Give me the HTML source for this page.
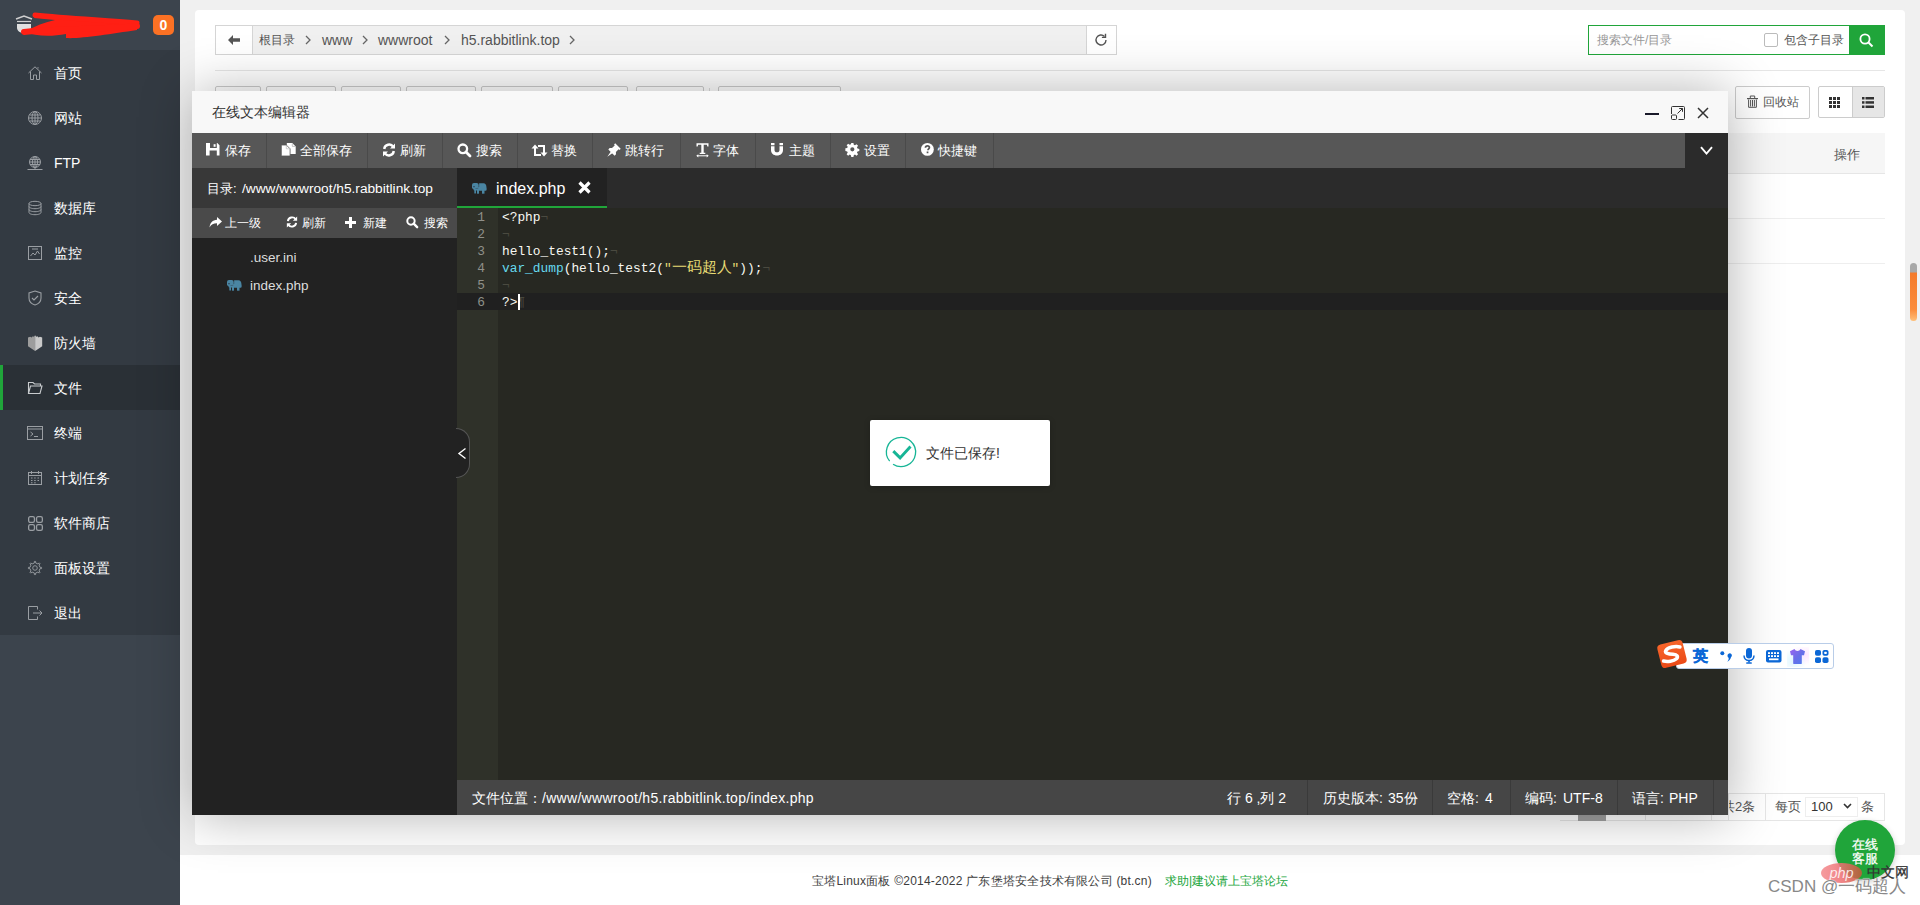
<!DOCTYPE html>
<html><head><meta charset="utf-8">
<style>
*{margin:0;padding:0;box-sizing:border-box}
html,body{width:1920px;height:905px;overflow:hidden;background:#f0f0f0;font-family:"Liberation Sans",sans-serif;font-size:14px;color:#333}
.a{position:absolute}
svg{position:absolute;overflow:visible}
#side{left:0;top:0;width:180px;height:905px;background:#3c444d}
#side .menu{left:0;top:50px;width:180px;height:585px;background:#333a42}
.mi{position:absolute;left:0;width:180px;height:45px;color:#fff;font-size:14px;line-height:45px}
.mi .t{position:absolute;left:54px;top:1px}
.mi svg{left:27px;top:15px;width:16px;height:16px}
.mi.act{background:#2a3036}
.mi.act:before{content:"";position:absolute;left:0;top:0;width:3px;height:45px;background:#20a53a}
#card{left:195px;top:10px;width:1710px;height:835px;background:#fff;border-radius:4px}
#footer{left:180px;top:855px;width:1740px;height:50px;background:#fff}
#dlg{left:192px;top:91px;width:1536px;height:724px;background:#f8f8f8;box-shadow:1px 1px 50px rgba(0,0,0,.3)}
.bc{left:215px;top:25px;width:902px;height:30px;border:1px solid #ccc;background:#f2f2f2}
.tb{background:#575757;color:#fff;font-size:14px}
.tbi{position:absolute;top:0;height:35px;line-height:35px;border-right:1px solid #4a4a4a}
.code{font-family:"Liberation Mono",monospace;font-size:12.85px;line-height:17px}
.inv{color:#4a4a40}
.st{top:690px;height:35px;line-height:35px;font-size:14px;color:#fff;white-space:nowrap}
</style></head><body>
<div id="side" class="a">
  <div class="a" style="left:0;top:0;width:180px;height:50px">
    <svg style="left:15px;top:14px;width:18px;height:20px" viewBox="0 0 18 20"><path d="M1 5l8-3 8 3" stroke="#d0d0d0" stroke-width="1.4" fill="none"/><path d="M2 7.5h14" stroke="#d0d0d0" stroke-width="1.2"/><path d="M2 10v4c0 3 3.5 5 7 5.5 3.5-.5 7-2.5 7-5.5v-4z" fill="#e0e0e0"/></svg>
    <svg style="left:20px;top:12px;width:120px;height:28px" viewBox="0 0 120 28"><path d="M15 3 C40 5 70 7 117 10 L117 18 C90 22 60 27 46 26 L46 22 C30 25 15 24 4 20 C15 14 25 10 35 8 L14 6Z" fill="#ff1f14"/><path d="M15 3 C45 6 80 8 117 11" stroke="#ff1f14" stroke-width="5" stroke-linecap="round" fill="none"/><path d="M4 20 C40 16 80 18 117 14" stroke="#ff1f14" stroke-width="6" stroke-linecap="round" fill="none"/></svg>
    <div class="a" style="left:153px;top:15px;width:21px;height:20px;background:#fb7124;border-radius:5px;color:#fff;font-weight:bold;font-size:14px;text-align:center;line-height:20px">0</div>
  </div>
  <div class="menu a">
    <div class="mi" style="top:0"><svg viewBox="0 0 16 16" fill="none" stroke="#9a9ea3" stroke-width="1"><path d="M1.5 8L8 1.8 14.5 8M3.5 6.5V14.5H6.5V10H9.5V14.5H12.5V6.5M11 3.5V2.2"/></svg><span class="t">首页</span></div>
    <div class="mi" style="top:45px"><svg viewBox="0 0 16 16" fill="none" stroke="#9a9ea3" stroke-width="1"><circle cx="8" cy="8" r="6.5"/><ellipse cx="8" cy="8" rx="3" ry="6.5"/><path d="M1.5 8h13M2.5 5h11M2.5 11h11M8 1.5v13"/></svg><span class="t">网站</span></div>
    <div class="mi" style="top:90px"><svg viewBox="0 0 16 16" fill="none" stroke="#9a9ea3" stroke-width="1"><circle cx="8" cy="7" r="5.5"/><ellipse cx="8" cy="7" rx="2.5" ry="5.5"/><path d="M2.5 7h11M3 4.5h10M3 9.5h10M8 1.5v13M0.5 14.5h15"/></svg><span class="t">FTP</span></div>
    <div class="mi" style="top:135px"><svg viewBox="0 0 16 16" fill="none" stroke="#9a9ea3" stroke-width="1"><ellipse cx="8" cy="3.5" rx="6" ry="2.2"/><path d="M2 3.5v9c0 1.2 2.7 2.2 6 2.2s6-1 6-2.2v-9M2 6.5c0 1.2 2.7 2.2 6 2.2s6-1 6-2.2M2 9.5c0 1.2 2.7 2.2 6 2.2s6-1 6-2.2"/></svg><span class="t">数据库</span></div>
    <div class="mi" style="top:180px"><svg viewBox="0 0 16 16" fill="none" stroke="#9a9ea3" stroke-width="1"><rect x="1.5" y="1.5" width="13" height="13"/><path d="M3.5 11l2.5-3 2 2 2.5-4 2 3M5 4h6"/></svg><span class="t">监控</span></div>
    <div class="mi" style="top:225px"><svg viewBox="0 0 16 16" fill="none" stroke="#9a9ea3" stroke-width="1.1"><path d="M8 1L14 3v5c0 3.5-2.8 6-6 7-3.2-1-6-3.5-6-7V3z"/><path d="M5 8l2 2 4-4"/></svg><span class="t">安全</span></div>
    <div class="mi" style="top:270px"><svg style="left:28px;top:15px;width:14.2px;height:16px" viewBox="0 0 14.2 16"><path d="M7.1 0.3L8.3 1.8 9.5 1.2 10.5 2.5 12 1.8 14.2 2.5V11.3L7.1 16z" fill="#c9c9c9"/><path d="M7.1 0.3L5.9 1.8 4.7 1.2 3.7 2.5 2.2 1.8 0 2.5V11.3L7.1 16z" fill="#9d9d9d"/></svg><span class="t">防火墙</span></div>
    <div class="mi act" style="top:315px"><svg viewBox="0 0 16 16" fill="none" stroke="#c8cbce" stroke-width="1.1"><path d="M1.5 13.5V2.5h4.5l1.5 1.5h6v2M1.5 13.5l2-7.5h11.5l-2 7.5z"/></svg><span class="t">文件</span></div>
    <div class="mi" style="top:360px"><svg viewBox="0 0 16 16" fill="none" stroke="#9a9ea3" stroke-width="1"><rect x="0.5" y="1.5" width="15" height="13"/><path d="M.5 4h15M3.5 7l2.5 2-2.5 2M7 11.5h4"/></svg><span class="t">终端</span></div>
    <div class="mi" style="top:405px"><svg viewBox="0 0 16 16" fill="none" stroke="#9a9ea3" stroke-width="1"><rect x="1.5" y="2.5" width="13" height="12"/><path d="M1.5 5.5h13M4.5 1v3M11.5 1v3M4 8h1.5M7.2 8h1.5M10.5 8H12M4 10.5h1.5M7.2 10.5h1.5M10.5 10.5H12M4 12.8h1.5M7.2 12.8h1.5"/></svg><span class="t">计划任务</span></div>
    <div class="mi" style="top:450px"><svg style="left:28px;top:16px;width:15px;height:15px" viewBox="0 0 15 15" fill="none" stroke="#9a9ea3" stroke-width="1.3"><rect x=".65" y=".65" width="5.8" height="5.8" rx="1.6"/><rect x="8.55" y=".65" width="5.8" height="5.8" rx="1.6"/><rect x=".65" y="8.55" width="5.8" height="5.8" rx="1.6"/><rect x="8.55" y="8.55" width="5.8" height="5.8" rx="1.6"/></svg><span class="t">软件商店</span></div>
    <div class="mi" style="top:495px"><svg style="left:28px;top:16px;width:14px;height:14px" viewBox="0 0 14 14" fill="none" stroke="#9a9ea3" stroke-width=".9" stroke-linejoin="round"><path d="M6.30 2.05 L6.38 0.43 L7.62 0.43 L7.70 2.05 L10.00 3.00 L11.21 1.91 L12.09 2.79 L11.00 4.00 L11.95 6.30 L13.57 6.38 L13.57 7.62 L11.95 7.70 L11.00 10.00 L12.09 11.21 L11.21 12.09 L10.00 11.00 L7.70 11.95 L7.62 13.57 L6.38 13.57 L6.30 11.95 L4.00 11.00 L2.79 12.09 L1.91 11.21 L3.00 10.00 L2.05 7.70 L0.43 7.62 L0.43 6.38 L2.05 6.30 L3.00 4.00 L1.91 2.79 L2.79 1.91 L4.00 3.00Z"/><circle cx="7" cy="7" r="2.3"/></svg><span class="t">面板设置</span></div>
    <div class="mi" style="top:540px"><svg viewBox="0 0 16 16" fill="none" stroke="#9a9ea3" stroke-width="1"><path d="M10.5 4.5v-3h-9v13h9v-3M6 8h9M12.5 5.5L15 8l-2.5 2.5"/></svg><span class="t">退出</span></div>
  </div>
</div>
<div id="card" class="a">
</div>
<!-- breadcrumb -->
<div class="a" style="left:215px;top:25px;width:902px;height:30px;border:1px solid #d5d5d5;background:#f0f0f0"></div>
<div class="a" style="left:215px;top:25px;width:38px;height:30px;border:1px solid #d5d5d5;background:#fff"></div>
<svg style="left:227px;top:34px;width:14px;height:12px" viewBox="0 0 14 12"><path d="M6 1L1 6l5 5V7.8h7V4.2H6z" fill="#555"/></svg>
<div class="a" style="left:259px;top:25px;height:30px;line-height:30px;font-size:12px;color:#555;white-space:nowrap">根目录</div>
<div class="a" style="left:322px;top:25px;height:30px;line-height:30px;font-size:14px;color:#555;white-space:nowrap">www</div>
<div class="a" style="left:378px;top:25px;height:30px;line-height:30px;font-size:14px;color:#555;white-space:nowrap">wwwroot</div>
<div class="a" style="left:461px;top:25px;height:30px;line-height:30px;font-size:14px;color:#555;white-space:nowrap">h5.rabbitlink.top</div>
<svg style="left:305px;top:35px;width:6px;height:10px" viewBox="0 0 6 10"><path d="M1 1l4 4-4 4" stroke="#666" stroke-width="1.3" fill="none"/></svg>
<svg style="left:362px;top:35px;width:6px;height:10px" viewBox="0 0 6 10"><path d="M1 1l4 4-4 4" stroke="#666" stroke-width="1.3" fill="none"/></svg>
<svg style="left:444px;top:35px;width:6px;height:10px" viewBox="0 0 6 10"><path d="M1 1l4 4-4 4" stroke="#666" stroke-width="1.3" fill="none"/></svg>
<svg style="left:569px;top:35px;width:6px;height:10px" viewBox="0 0 6 10"><path d="M1 1l4 4-4 4" stroke="#666" stroke-width="1.3" fill="none"/></svg>
<div class="a" style="left:1086px;top:25px;width:31px;height:30px;border:1px solid #d5d5d5;background:#fff"></div>
<svg style="left:1094px;top:33px;width:14px;height:14px" viewBox="0 0 14 14"><path d="M12 7a5 5 0 1 1-1.5-3.6" stroke="#555" stroke-width="1.4" fill="none"/><path d="M11.5 0.8v3.6H7.9" stroke="#555" stroke-width="1.4" fill="none"/></svg>
<!-- search -->
<div class="a" style="left:1588px;top:25px;width:262px;height:30px;border:1px solid #20a53a;background:#fff"></div>
<div class="a" style="left:1597px;top:25px;height:30px;line-height:30px;font-size:12px;color:#999">搜索文件/目录</div>
<div class="a" style="left:1764px;top:33px;width:14px;height:14px;border:1px solid #bbb;border-radius:2px;background:#fff"></div>
<div class="a" style="left:1784px;top:25px;height:30px;line-height:30px;font-size:12px;color:#555">包含子目录</div>
<div class="a" style="left:1849px;top:25px;width:36px;height:30px;background:#20a53a"></div>
<svg style="left:1859px;top:33px;width:15px;height:15px" viewBox="0 0 15 15"><circle cx="6" cy="6" r="4.6" stroke="#fff" stroke-width="1.8" fill="none"/><path d="M9.5 9.5l4 4" stroke="#fff" stroke-width="2"/></svg>
<div class="a" style="left:215px;top:70px;width:1670px;height:1px;background:#e6e6e6"></div>
<!-- button row (hidden mostly) -->
<div class="a" style="left:215px;top:86px;width:46px;height:32px;border:1px solid #ccc;border-radius:2px;background:#fff"></div>
<div class="a" style="left:266px;top:86px;width:70px;height:32px;border:1px solid #ccc;border-radius:2px;background:#fff"></div>
<div class="a" style="left:341px;top:86px;width:60px;height:32px;border:1px solid #ccc;border-radius:2px;background:#fff"></div>
<div class="a" style="left:406px;top:86px;width:70px;height:32px;border:1px solid #ccc;border-radius:2px;background:#fff"></div>
<div class="a" style="left:481px;top:86px;width:72px;height:32px;border:1px solid #ccc;border-radius:2px;background:#fff"></div>
<div class="a" style="left:558px;top:86px;width:70px;height:32px;border:1px solid #ccc;border-radius:2px;background:#fff"></div>
<div class="a" style="left:636px;top:86px;width:68px;height:32px;border:1px solid #ccc;border-radius:2px;background:#fff"></div>
<div class="a" style="left:709px;top:88px;width:1px;height:30px;background:#ddd"></div>
<div class="a" style="left:718px;top:86px;width:123px;height:32px;border:1px solid #ccc;border-radius:2px;background:#fff"></div>
<div class="a" style="left:1735px;top:86px;width:75px;height:33px;border:1px solid #ccc;border-radius:2px;background:#fff"></div>
<svg style="left:1747px;top:95px;width:11px;height:13px" viewBox="0 0 11 13" fill="none" stroke="#555"><path d="M3.3 3V1h4.4v2" stroke-width="1"/><path d="M0 3.6h11" stroke-width="1.2"/><path d="M1.6 4.5V12.3H9.4V4.5M3.6 5V11.5M5.5 5V11.5M7.4 5V11.5" stroke-width="1"/></svg>
<div class="a" style="left:1763px;top:86px;height:33px;line-height:33px;font-size:12px;color:#555">回收站</div>
<div class="a" style="left:1818px;top:86px;width:67px;height:32px;border:1px solid #ccc;border-radius:2px;background:#fff"></div>
<div class="a" style="left:1852px;top:87px;width:32px;height:30px;background:#e6e6e6;border-left:1px solid #ccc"></div>
<svg style="left:1829px;top:97px;width:11px;height:11px" viewBox="0 0 11 11" fill="#333"><rect x="0" y="0" width="3" height="3"/><rect x="4" y="0" width="3" height="3"/><rect x="8" y="0" width="3" height="3"/><rect x="0" y="4" width="3" height="3"/><rect x="4" y="4" width="3" height="3"/><rect x="8" y="4" width="3" height="3"/><rect x="0" y="8" width="3" height="3"/><rect x="4" y="8" width="3" height="3"/><rect x="8" y="8" width="3" height="3"/></svg>
<svg style="left:1862px;top:97px;width:12px;height:11px" viewBox="0 0 12 11" fill="#333"><rect x="0" y="0" width="2.5" height="2.5"/><rect x="3.5" y="0" width="8.5" height="2.5"/><rect x="0" y="4.2" width="2.5" height="2.5"/><rect x="3.5" y="4.2" width="8.5" height="2.5"/><rect x="0" y="8.5" width="2.5" height="2.5"/><rect x="3.5" y="8.5" width="8.5" height="2.5"/></svg>
<!-- table -->
<div class="a" style="left:215px;top:133px;width:1670px;height:41px;background:#f6f6f6;border-bottom:1px solid #e6e6e6"></div>
<div class="a" style="left:1834px;top:134px;height:41px;line-height:41px;font-size:13px;color:#555">操作</div>
<div class="a" style="left:215px;top:218px;width:1670px;height:1px;background:#eee"></div>
<div class="a" style="left:215px;top:263px;width:1670px;height:1px;background:#eee"></div>
<!-- pagination -->
<div class="a" style="left:1560px;top:793px;width:325px;height:28px;border-top:1px solid #e6e6e6;border-bottom:1px solid #e6e6e6"></div>
<div class="a" style="left:1578px;top:814px;width:28px;height:7px;background:#a0a0a0"></div>
<div class="a" style="left:1645px;top:814px;width:1px;height:7px;background:#e6e6e6"></div>
<div class="a" style="left:1711px;top:814px;width:1px;height:7px;background:#e6e6e6"></div>
<div class="a" style="left:1722px;top:793px;height:28px;line-height:28px;font-size:13px;color:#555">共2条</div>
<div class="a" style="left:1728px;top:793px;width:1px;height:28px;background:#e6e6e6"></div>
<div class="a" style="left:1765px;top:793px;width:120px;height:28px;border:1px solid #e6e6e6;background:#fff"></div>
<div class="a" style="left:1775px;top:792px;height:29px;line-height:29px;font-size:13px;color:#555">每页</div>
<div class="a" style="left:1805px;top:797px;width:53px;height:20px;border:1px solid #eee;background:#fff"></div>
<div class="a" style="left:1811px;top:797px;height:20px;line-height:20px;font-size:13px;color:#333">100</div>
<svg style="left:1843px;top:803px;width:9px;height:6px" viewBox="0 0 9 6"><path d="M1 1l3.5 3.5L8 1" stroke="#333" stroke-width="1.6" fill="none"/></svg>
<div class="a" style="left:1861px;top:792px;height:29px;line-height:29px;font-size:13px;color:#555">条</div>
<!-- scrollbar -->
<div class="a" style="left:1910px;top:263px;width:7px;height:58px;border-radius:4px;background:linear-gradient(#a8a8a8 0,#a8a8a8 9px,#f47a2a 10px,#fb8c3c 80%,#ffc07a 100%)"></div>
<div id="footer" class="a"></div>
<div class="a" style="left:812px;top:872px;height:18px;line-height:18px;font-size:12px;color:#3d3d3d;white-space:nowrap;letter-spacing:.22px">宝塔Linux面板 ©2014-2022 广东堡塔安全技术有限公司 (bt.cn)</div>
<div class="a" style="left:1165px;top:872px;height:18px;line-height:18px;font-size:12px;color:#20a53a;white-space:nowrap">求助|建议请上宝塔论坛</div>
<div id="dlg" class="a">
 <div class="a" style="left:20px;top:0;height:42px;line-height:42px;font-size:14px;color:#333">在线文本编辑器</div>
 <svg style="left:1453px;top:22px;width:14px;height:2px" viewBox="0 0 14 2"><rect width="14" height="2" fill="#1a1a2a"/></svg>
 <svg style="left:1479px;top:15px;width:14px;height:14px" viewBox="0 0 14 14" fill="none" stroke="#333" stroke-width="1"><path d="M0.5 8V1.5a1 1 0 0 1 1-1h11a1 1 0 0 1 1 1v11a1 1 0 0 1-1 1H7.5M1.5 9h3a1 1 0 0 1 1 1v2.5a1 1 0 0 1-1 1h-3a1 1 0 0 1-1-1V10a1 1 0 0 1 1-1zM6.5 7.5L11.5 2.5M8.2 2.5h3.3v3.3"/></svg>
 <svg style="left:1505px;top:16px;width:12px;height:12px" viewBox="0 0 12 12"><path d="M1 1l10 10M11 1L1 11" stroke="#333" stroke-width="1.5"/></svg>
 <!-- toolbar -->
 <div class="a" style="left:0;top:42px;width:1536px;height:35px;background:#2b2b2b"></div>
 <div class="a tb" style="left:0;top:42px;width:1493px;height:35px"></div>
 <div class="a" style="left:74px;top:42px;width:1px;height:35px;background:#4a4a4a"></div>
 <div class="a" style="left:175px;top:42px;width:1px;height:35px;background:#4a4a4a"></div>
 <div class="a" style="left:250px;top:42px;width:1px;height:35px;background:#4a4a4a"></div>
 <div class="a" style="left:325px;top:42px;width:1px;height:35px;background:#4a4a4a"></div>
 <div class="a" style="left:400px;top:42px;width:1px;height:35px;background:#4a4a4a"></div>
 <div class="a" style="left:488px;top:42px;width:1px;height:35px;background:#4a4a4a"></div>
 <div class="a" style="left:563px;top:42px;width:1px;height:35px;background:#4a4a4a"></div>
 <div class="a" style="left:638px;top:42px;width:1px;height:35px;background:#4a4a4a"></div>
 <div class="a" style="left:713px;top:42px;width:1px;height:35px;background:#4a4a4a"></div>
 <div class="a" style="left:801px;top:42px;width:1px;height:35px;background:#4a4a4a"></div>
 <svg style="left:14px;top:52px;width:13.5px;height:12.5px" viewBox="0 0 13.5 12.5" fill="#fff"><path d="M0 0H4V5H10.8V0H11.3L13.5 2.2V12.5H10.8V7.6H3.6V12.5H0Z"/><path d="M7.6 1.2h2v2.6h-2z"/></svg>
 <div class="a" style="left:33px;top:42px;height:35px;line-height:35px;font-size:13px;color:#fff;white-space:nowrap">保存</div>
 <svg style="left:89px;top:52px;width:15px;height:13px" viewBox="0 0 15 13"><path d="M5.8 0H11.3L14.7 3.4V10.9H5.8Z" fill="#fff"/><path d="M11.3 0.5V3.4H14.2" stroke="#aaa" stroke-width=".7" fill="none"/><path d="M0.3 2H5.3L9.1 5.8V13H0.3Z" fill="#fff" stroke="#575757" stroke-width=".8"/><path d="M5.3 2.3V5.8H8.8" stroke="#bbb" stroke-width=".7" fill="none"/></svg>
 <div class="a" style="left:108px;top:42px;height:35px;line-height:35px;font-size:13px;color:#fff;white-space:nowrap">全部保存</div>
 <svg style="left:190px;top:52px;width:14px;height:14px" viewBox="0 0 14 14" fill="none" stroke="#fff" stroke-width="2.4"><path d="M2.2 6A5 5 0 0 1 11.3 3.8M11.8 8A5 5 0 0 1 2.7 10.2"/><path d="M13 0.5v5h-5z M1 13.5v-5h5z" fill="#fff" stroke="none"/></svg>
 <div class="a" style="left:208px;top:42px;height:35px;line-height:35px;font-size:13px;color:#fff;white-space:nowrap">刷新</div>
 <svg style="left:265px;top:52px;width:14px;height:14px" viewBox="0 0 14 14" fill="none" stroke="#fff" stroke-width="2.3"><circle cx="5.8" cy="5.8" r="4.3"/><path d="M9 9l4 4" stroke-width="2.8" stroke-linecap="round"/></svg>
 <div class="a" style="left:284px;top:42px;height:35px;line-height:35px;font-size:13px;color:#fff;white-space:nowrap">搜索</div>
 <svg style="left:339px;top:53px;width:17px;height:13px" viewBox="0 0 17 13" fill="#fff"><path d="M3 12V4.5H0.5L4 0.5l3.5 4H5v5.5h5v2z"/><path d="M14 1v7.5h2.5L13 12.5 9.5 8.5H12V3H7V1z"/></svg>
 <div class="a" style="left:359px;top:42px;height:35px;line-height:35px;font-size:13px;color:#fff;white-space:nowrap">替换</div>
 <svg style="left:415px;top:51.5px;width:14px;height:14px" viewBox="0 0 14 14" fill="#fff"><path d="M8.2 0.3L13.7 5.8 12.6 6.9 11.6 6.3 8.9 9 9 11.3 7.6 12.7 1.3 6.4 2.7 5 5 5.1 7.7 2.4 7.1 1.4z"/><path d="M4.1 8.3L0.3 13.7 5.7 9.9z"/></svg>
 <div class="a" style="left:433px;top:42px;height:35px;line-height:35px;font-size:13px;color:#fff;white-space:nowrap">跳转行</div>
 <svg style="left:504px;top:52px;width:13px;height:14px" viewBox="0 0 13 14" fill="#fff"><path d="M0.5 0.3h12v3.2h-1.2L10.9 1.8H7.7v8h1.6v1.2H3.7V9.8h1.6v-8H2.1L1.7 3.5H.5z"/><path d="M1.8 12.8h9.4" stroke="#fff" stroke-width="1"/><path d="M0.3 12.8l2-1.6v3.2zM12.7 12.8l-2-1.6v3.2z"/></svg>
 <div class="a" style="left:521px;top:42px;height:35px;line-height:35px;font-size:13px;color:#fff;white-space:nowrap">字体</div>
 <svg style="left:579px;top:52px;width:12px;height:12.5px" viewBox="0 0 12 12.5" fill="#fff"><path d="M0 0h3.5v2.2H0zM8.5 0H12v2.2H8.5zM0 3.2h3.5V7c0 1.5 1 2.3 2.5 2.3S8.5 8.5 8.5 7V3.2H12V7c0 3.4-2.5 5.5-6 5.5S0 10.4 0 7z"/></svg>
 <div class="a" style="left:597px;top:42px;height:35px;line-height:35px;font-size:13px;color:#fff;white-space:nowrap">主题</div>
 <svg style="left:654px;top:52px;width:12.7px;height:12.7px" viewBox="0 0 14 14" fill="#fff"><path d="M5.8 0h2.4l.4 2 1.3.6 1.7-1.2 1.7 1.7-1.2 1.7.6 1.3 2 .4v2.4l-2 .4-.6 1.3 1.2 1.7-1.7 1.7-1.7-1.2-1.3.6-.4 2H5.8l-.4-2-1.3-.6-1.7 1.2-1.7-1.7 1.2-1.7-.6-1.3-2-.4V5.8l2-.4.6-1.3L.7 2.4l1.7-1.7 1.7 1.2 1.3-.6zM7 4.7A2.3 2.3 0 1 0 7 9.3 2.3 2.3 0 1 0 7 4.7z"/></svg>
 <div class="a" style="left:672px;top:42px;height:35px;line-height:35px;font-size:13px;color:#fff;white-space:nowrap">设置</div>
 <svg style="left:729px;top:52px;width:12.8px;height:12.8px" viewBox="0 0 14 14"><circle cx="7" cy="7" r="7" fill="#fff"/><path d="M4.9 5.3C4.9 4 5.8 3.1 7.1 3.1S9.2 4 9.2 5c0 1.5-1.6 1.6-1.6 3" stroke="#575757" stroke-width="1.9" fill="none"/><rect x="6.2" y="9.3" width="1.9" height="1.9" fill="#575757"/></svg>
 <div class="a" style="left:746px;top:42px;height:35px;line-height:35px;font-size:13px;color:#fff;white-space:nowrap">快捷键</div>
 <svg style="left:1508px;top:55px;width:13px;height:9px" viewBox="0 0 13 9"><path d="M1 1.2L6.5 7.5 12 1.2" stroke="#fff" stroke-width="1.9" fill="none"/></svg>
 <div class="a" style="left:0;top:77px;width:265px;height:647px;background:#222"></div>
 <div class="a" style="left:0;top:77px;width:265px;height:40px;background:#383838"></div>
 <div class="a" style="left:15px;top:77px;height:40px;line-height:40px;font-size:13px;color:#fff;white-space:nowrap;padding-top:1px">目录<span style="display:inline-block;width:9px">:</span><span style="font-size:13.7px">/www/wwwroot/h5.rabbitlink.top</span></div>
 <div class="a" style="left:0;top:117px;width:265px;height:30px;background:#4a4a4a"></div>
 <svg style="left:17px;top:126px;width:13px;height:11px" viewBox="0 0 13 11" fill="#fff"><path d="M8 0l5 4.5L8 9V6.3C4.5 6.3 2 7.5 0.5 10.5 1 5.5 3.5 3 8 2.7z"/></svg>
 <div class="a" style="left:33px;top:117px;height:30px;line-height:30px;font-size:12px;color:#fff">上一级</div>
 <svg style="left:94px;top:125px;width:12px;height:12px" viewBox="0 0 14 14" fill="none" stroke="#fff" stroke-width="2.2"><path d="M2.2 6A5 5 0 0 1 11.3 3.8M11.8 8A5 5 0 0 1 2.7 10.2"/><path d="M13 0.5v5h-5z M1 13.5v-5h5z" fill="#fff" stroke="none"/></svg>
 <div class="a" style="left:110px;top:117px;height:30px;line-height:30px;font-size:12px;color:#fff">刷新</div>
 <svg style="left:153px;top:126px;width:11px;height:11px" viewBox="0 0 11 11" fill="#fff"><path d="M4 0h3v4h4v3H7v4H4V7H0V4h4z"/></svg>
 <div class="a" style="left:171px;top:117px;height:30px;line-height:30px;font-size:12px;color:#fff">新建</div>
 <svg style="left:214px;top:125px;width:12px;height:12px" viewBox="0 0 14 14" fill="none" stroke="#fff" stroke-width="2.3"><circle cx="5.8" cy="5.8" r="4.3"/><path d="M9 9l4 4" stroke-width="2.8" stroke-linecap="round"/></svg>
 <div class="a" style="left:232px;top:117px;height:30px;line-height:30px;font-size:12px;color:#fff">搜索</div>
 <div class="a" style="left:58px;top:158px;height:18px;line-height:18px;font-size:13.5px;color:#ddd">.user.ini</div>
 <svg style="left:35px;top:189px;width:14.4px;height:10.7px" viewBox="0 0 14.4 10.7" fill="#4a85a2"><rect x="0" y="0" width="6.7" height="6.2" rx="2"/><path d="M7.1 0.2H11.5C13.2 0.2 14.4 2 14.4 3.7V7.4H7.1z"/><rect x="1.5" y="4" width="12.9" height="3.4" rx="1"/><rect x="2.3" y="5" width="1.7" height="5.4" rx=".5"/><rect x="5" y="6" width="2" height="4.7"/><rect x="10" y="6" width="2.5" height="4.7"/><circle cx="2" cy="3.7" r=".6" fill="#223"/><path d="M3.5 5.5Q5 6 6.5 5" stroke="#345" stroke-width=".5" fill="none"/></svg>
 <div class="a" style="left:58px;top:186px;height:18px;line-height:18px;font-size:13.5px;color:#ddd">index.php</div>
 <!-- tabs -->
 <div class="a" style="left:265px;top:77px;width:1271px;height:40px;background:#2b2b2b"></div>
 <div class="a" style="left:265px;top:77px;width:150px;height:40px;background:#222;border-bottom:2px solid #20a53a"></div>
 <svg style="left:279.5px;top:91.6px;width:14.4px;height:10.7px" viewBox="0 0 14.4 10.7" fill="#4a85a2"><rect x="0" y="0" width="6.7" height="6.2" rx="2"/><path d="M7.1 0.2H11.5C13.2 0.2 14.4 2 14.4 3.7V7.4H7.1z"/><rect x="1.5" y="4" width="12.9" height="3.4" rx="1"/><rect x="2.3" y="5" width="1.7" height="5.4" rx=".5"/><rect x="5" y="6" width="2" height="4.7"/><rect x="10" y="6" width="2.5" height="4.7"/><circle cx="2" cy="3.7" r=".6" fill="#223"/><path d="M3.5 5.5Q5 6 6.5 5" stroke="#345" stroke-width=".5" fill="none"/></svg>
 <div class="a" style="left:304px;top:77px;height:40px;line-height:40px;font-size:16px;color:#fff;padding-top:1px">index.php</div>
 <svg style="left:386px;top:90px;width:13px;height:13px" viewBox="0 0 13 13"><path d="M1.5 1.5l10 10M11.5 1.5l-10 10" stroke="#fff" stroke-width="3.2"/></svg>
 <!-- editor -->
 <div class="a" style="left:265px;top:117px;width:1271px;height:572px;background:#272822"></div>
 <div class="a" style="left:265px;top:117px;width:41px;height:572px;background:#2f3129"></div>
 <div class="a" style="left:265px;top:202px;width:1271px;height:17px;background:#202020"></div>
 <!-- code -->
 <div class="a code" style="left:263px;top:118px;width:30px;text-align:right;color:#8f908a">1<br>2<br>3<br>4<br>5<br>6</div>
 <div class="a code" style="left:310px;top:118px;color:#f8f8f2;white-space:pre">&lt;?php<span class="inv">¬</span>
<span class="inv">¬</span>
hello_test1();<span class="inv">¬</span>
<span style="color:#66d9ef">var_dump</span>(hello_test2(<span style="color:#e6db74">"<span style="font-size:15px">一码超人</span>"</span>));<span class="inv">¬</span>
<span class="inv">¬</span>
?&gt;<span class="inv">¶</span></div>
 <div class="a" style="left:326px;top:203px;width:2px;height:16px;background:#fff"></div>
 <!-- collapse handle -->
 <div class="a" style="left:264px;top:337px;width:14px;height:50px;background:#222;border:1px solid #555;border-left:none;border-radius:0 14px 14px 0"></div>
 <svg style="left:265.5px;top:356.5px;width:8px;height:11px" viewBox="0 0 8 11"><path d="M7.5 0.5L1 5.5l6.5 5" stroke="#fff" stroke-width="1.4" fill="none"/></svg>
 <!-- status bar -->
 <div class="a" style="left:265px;top:689px;width:1271px;height:35px;background:#464646"></div>
 <div class="a st" style="left:280px">文件位置：<span style="letter-spacing:.3px">/www/wwwroot/h5.rabbitlink.top/index.php</span></div>
 <div class="a st" style="left:1035px">行 6 ,列 2</div>
 <div class="a" style="left:1115px;top:689px;width:1px;height:35px;background:#3a3a3a"></div>
 <div class="a st" style="left:1131px">历史版本<span style="display:inline-block;width:9px">:</span>35份</div>
 <div class="a" style="left:1240px;top:689px;width:1px;height:35px;background:#3a3a3a"></div>
 <div class="a st" style="left:1255px">空格<span style="display:inline-block;width:10px">:</span>4</div>
 <div class="a" style="left:1318px;top:689px;width:1px;height:35px;background:#3a3a3a"></div>
 <div class="a st" style="left:1333px">编码<span style="display:inline-block;width:10px">:</span>UTF-8</div>
 <div class="a" style="left:1425px;top:689px;width:1px;height:35px;background:#3a3a3a"></div>
 <div class="a st" style="left:1440px">语言<span style="display:inline-block;width:9px">:</span>PHP</div>
 <div class="a" style="left:1521px;top:689px;width:1px;height:35px;background:#3a3a3a"></div>
</div>
<!-- toast -->
<div class="a" style="left:870px;top:420px;width:180px;height:66px;background:#fff;border-radius:2px;box-shadow:0 1px 6px rgba(0,0,0,.2)"></div>
<svg style="left:884.5px;top:436px;width:32px;height:32px" viewBox="0 0 32 32"><path d="M4.65 25.19A14.6 14.6 0 1 1 8.05 28.25" stroke="#17b596" stroke-width="1.3" fill="none"/><path d="M8.3 15.1L15.1 21.9 25.5 10.5" stroke="#17b596" stroke-width="2.9" fill="none"/></svg>
<div class="a" style="left:926px;top:420px;height:66px;line-height:66px;font-size:14px;color:#333;white-space:nowrap">文件已保存!</div>
<!-- sogou ime -->
<div class="a" style="left:1676px;top:643px;width:158px;height:26px;background:#fff;border:1px solid #b9cde8;border-radius:3px"></div>
<svg style="left:1655px;top:638px;width:34px;height:32px" viewBox="0 0 34 32"><defs><linearGradient id="so" x1="0" y1="0" x2="0" y2="1"><stop offset="0" stop-color="#f8652a"/><stop offset="1" stop-color="#ea4a17"/></linearGradient></defs><rect x="4" y="4" width="26" height="24" rx="4" fill="url(#so)" transform="rotate(-14 17 16)"/><path d="M26 10.5C22 8.5 14 8.5 11.5 11.5 9.5 14 14 15.5 18 16.5S23 19.5 20.5 21.5C17.5 23.5 11 23 7.5 21.5" stroke="#fff" stroke-width="3.6" fill="none" stroke-linecap="round" transform="rotate(-10 17 16)"/></svg>
<div class="a" style="left:1693px;top:645px;height:22px;line-height:22px;font-size:14.5px;font-weight:bold;color:#0b67d6;-webkit-text-stroke:.5px #0b67d6">英</div>
<svg style="left:1719px;top:651px;width:13px;height:11px" viewBox="0 0 13 11" fill="#0b67d6"><circle cx="3.3" cy="2.3" r="2"/><path d="M8.5 4.5a2.2 2.2 0 1 1 3.5 1.8C11.5 8.5 10 10 8.3 10.8 9.3 9.5 9.8 8.5 9.7 6.8 9 6.5 8.5 5.6 8.5 4.5z"/></svg>
<svg style="left:1743px;top:648px;width:12px;height:16px" viewBox="0 0 12 16" fill="#0b67d6"><rect x="3" y="0" width="6" height="10.5" rx="3"/><path d="M1 7.5c0 3 2.2 5 5 5s5-2 5-5" stroke="#0b67d6" stroke-width="1.5" fill="none"/><rect x="5.2" y="12" width="1.6" height="2.5"/><rect x="3.2" y="14.2" width="5.6" height="1.6" rx=".5"/></svg>
<svg style="left:1766px;top:650px;width:15.5px;height:12.5px" viewBox="0 0 15.5 12.5"><rect x="0" y="0" width="15.5" height="12.5" rx="2" fill="#0b67d6"/><g fill="#fff"><rect x="2" y="2.2" width="2" height="1.8"/><rect x="5" y="2.2" width="2" height="1.8"/><rect x="8" y="2.2" width="2" height="1.8"/><rect x="11" y="2.2" width="2" height="1.8"/><rect x="2" y="5.2" width="2" height="1.8"/><rect x="5" y="5.2" width="2" height="1.8"/><rect x="8" y="5.2" width="2" height="1.8"/><rect x="11" y="5.2" width="2" height="1.8"/><rect x="3" y="8.4" width="9.5" height="1.8"/></g></svg>
<div class="a" style="left:1787px;top:647px;width:22px;height:20px;background:radial-gradient(ellipse at 30% 70%,rgba(200,240,255,.6),rgba(255,255,255,0) 60%),radial-gradient(ellipse at 80% 40%,rgba(250,210,255,.6),rgba(255,255,255,0) 60%)"></div>
<svg style="left:1790px;top:649px;width:15px;height:15px" viewBox="0 0 15 15"><defs><linearGradient id="sg" x1="0" y1="0" x2="1" y2="1"><stop offset="0" stop-color="#9a62f0"/><stop offset=".5" stop-color="#6a6ee8"/><stop offset="1" stop-color="#4a7cf0"/></linearGradient></defs><path d="M4.5 0L0 2.2 1 6.2H3.2V14.5c0 .3.2.5.5.5h7.6c.3 0 .5-.2.5-.5V6.2H14L15 2.2 10.5 0C10 1.3 8.8 2 7.5 2S5 1.3 4.5 0z" fill="url(#sg)"/></svg>
<svg style="left:1815px;top:650px;width:13.5px;height:13px" viewBox="0 0 13.5 13" fill="#0b67d6"><rect x="0" y="0" width="6" height="5.8" rx="1.8"/><rect x="7.5" y="0" width="6" height="5.8" rx="1.8"/><rect x="9.3" y="1.7" width="2.4" height="2.4" rx=".5" fill="#fff"/><rect x="0" y="7.2" width="6" height="5.8" rx="1.8"/><rect x="7.5" y="7.2" width="6" height="5.8" rx="1.8"/></svg>
<!-- online service -->
<div class="a" style="left:1835px;top:820px;width:60px;height:60px;border-radius:50%;background:#20a53a;box-shadow:0 2px 6px rgba(0,0,0,.2)"></div>
<div class="a" style="left:1835px;top:838px;width:60px;text-align:center;line-height:14px;font-size:12.5px;color:#fff;-webkit-text-stroke:.25px #fff">在线<br>客服</div>
<!-- watermarks -->
<svg style="left:1820px;top:862px;width:44px;height:22px" viewBox="0 0 44 22"><defs><linearGradient id="ph" x1="0" x2="1"><stop offset="0" stop-color="#f48a8e"/><stop offset=".5" stop-color="#ee6f73"/><stop offset="1" stop-color="#c7593a"/></linearGradient></defs><ellipse cx="21.5" cy="11" rx="20.5" ry="10" fill="url(#ph)" fill-opacity=".85"/><text x="21.5" y="15.5" font-family="Liberation Sans" font-style="italic" font-size="14.5" fill="#fff" fill-opacity=".85" text-anchor="middle">php</text></svg>
<div class="a" style="left:1867px;top:863px;height:18px;line-height:18px;font-size:14px;color:#333;-webkit-text-stroke:.3px #333">中文网</div>
<div class="a" style="left:1768px;top:876px;height:22px;line-height:22px;font-size:17px;color:#888;white-space:nowrap;text-shadow:0 0 1px #fff,0 0 1px #fff">CSDN @一码超人</div>
</body></html>
